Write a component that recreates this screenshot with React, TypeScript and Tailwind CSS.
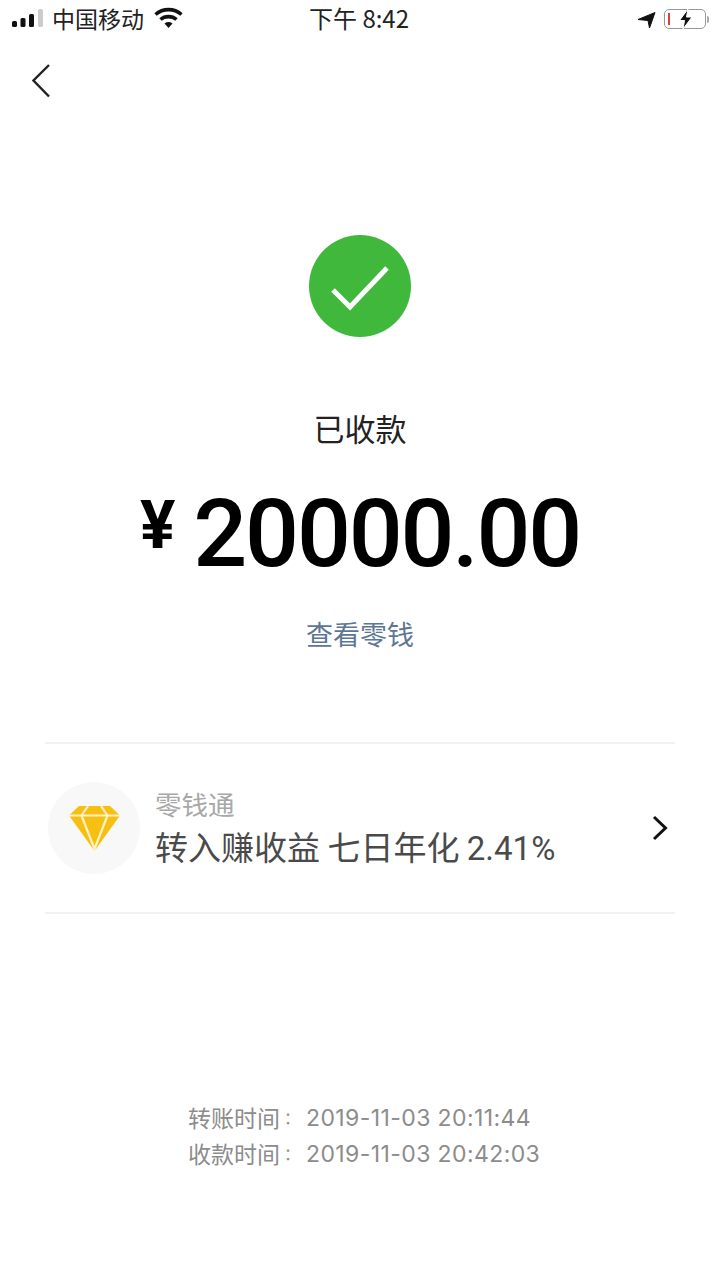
const cjk = "font-['Noto_Sans_CJK_SC','Noto_Sans',sans-serif]"

function StatusBar() {
  return (
    <div className="h-[38px] px-[12px] flex items-center justify-between relative text-[#222]">
      <div className="flex items-center -mt-[2px]">
        {/* signal bars */}
        <svg width="32" height="20" viewBox="0 0 32 20">
          <rect x="0" y="13" width="5" height="6" rx="1.5" fill="#111" />
          <rect x="8.5" y="10" width="5" height="9" rx="1.5" fill="#111" />
          <rect x="17" y="6" width="5" height="13" rx="1.5" fill="#111" />
          <rect x="26" y="1" width="5" height="18" rx="1.5" fill="#ccc" />
        </svg>
        <span className={`${cjk} ml-[8px] text-[23px] leading-none`}>中国移动</span>
        <svg className="ml-[10px]" width="29" height="22" viewBox="0 0 29 22">
          <path d="M1.5 7.5C9 1 20 1 27.5 7.5" fill="none" stroke="#111" strokeWidth="3.6" />
          <path d="M6.5 12.5C11 8.6 18 8.6 22.5 12.5" fill="none" stroke="#111" strokeWidth="3.6" />
          <path d="M10.5 16.5L14.5 21L18.5 16.5C16 14.6 13 14.6 10.5 16.5Z" fill="#111" />
        </svg>
      </div>
      <span className={`${cjk} absolute left-[309px] top-[4px] text-[24px] leading-[28px]`}>下午 8:42</span>
      <div className="flex items-center -mr-[1px]">
        <svg width="19" height="19" viewBox="0 0 19 19">
          <path d="M18 2.5L1 9.5L11 10.5L12.5 18Z" fill="#111" stroke="#111" strokeWidth="1" strokeLinejoin="round" />
        </svg>
        <div className="ml-[8px] w-[42px] h-[20px] border-[1.5px] border-[#999] rounded-[5px] relative flex items-center justify-center">
          <div className="absolute left-[3px] top-[3px] w-[2px] h-[12px] bg-[#d9433f]" />
          <svg width="15" height="20" viewBox="0 0 15 20" className="shrink-0">
            <path d="M10 0L1.5 11.5H6.5L5 20L14 8H8.5Z" fill="#111" stroke="#fff" strokeWidth="1" />
          </svg>
        </div>
        <div className="ml-[1px] w-[2px] h-[7px] bg-[#aaa] rounded-r-full" />
      </div>
    </div>
  )
}

function Diamond() {
  return (
    <svg width="51" height="45" viewBox="0 0 51 45">
      <path d="M10 0H41L51 9.5L25.5 45L0 9.5Z" fill="#f6bf12" />
      <path d="M0 9.5H51M12.5 9.5L25.5 43L38.5 9.5M12.5 9.5L19 0M38.5 9.5L32 0" fill="none" stroke="#fff3c4" strokeWidth="2.2" />
    </svg>
  )
}

function TimeRow({ label, value }: { label: string; value: string }) {
  return (
    <p className="h-[36px] flex items-center">
      <span className="-mt-[2px]">{label}</span>
      {/* TC font keeps the colon centred in its box */}
      <span className="text-[16px] font-['Noto_Sans_CJK_TC',sans-serif]">：</span>
      <span className="font-['Inter',sans-serif] ml-[10px] tracking-[0.4px]">{value}</span>
    </p>
  )
}

export default function App() {
  return (
    <div className={`${cjk} w-[720px] h-[1280px] bg-white overflow-hidden`}>
      <StatusBar />

      <div className="h-[197px] pl-[32px] pt-[26px]">
        <svg width="18" height="34" viewBox="0 0 18 34">
          <path d="M17 1L1.5 16.5L17 32.5" fill="none" stroke="#222" strokeWidth="2.4" />
        </svg>
      </div>

      <div className="flex flex-col items-center">
        <div className="w-[102px] h-[102px] rounded-full bg-[#3fb83c] flex items-center justify-center">
          <svg width="102" height="102" viewBox="0 0 102 102">
            <path d="M24 55L41 72L78 33" fill="none" stroke="#fff" strokeWidth="5" />
          </svg>
        </div>

        <p className="mt-[69px] text-[31px] leading-[44px] text-[#222]">已收款</p>

        <div className="mt-[32px] h-[104px] flex items-start text-black font-['Roboto',sans-serif] font-[550]">
          <span className="mt-[5px] text-[66px] leading-[78px] font-bold">¥</span>
          <span className="ml-[18px] text-[95px] leading-[104px] tracking-[-2.2px]">20000.00</span>
        </div>

        <p className="mt-[29px] text-[27px] leading-[38px] text-[#5e7696]">查看零钱</p>
      </div>

      <div className="mt-[89px] mx-[45px] h-[172px] border-y-2 border-[#f1f1f1] flex items-center">
        <div className="ml-[3px] w-[92px] h-[92px] rounded-full bg-[#f8f8f8] flex items-center justify-center">
          <Diamond />
        </div>
        <div className="ml-[15px] flex-1">
          <p className="text-[26.5px] leading-[36px] text-[#a8a8a8]">零钱通</p>
          <p className="mt-[2px] text-[33px] leading-[44px] text-[#4a4a4a]">
            转入赚收益 七日年化 <span className="font-['Roboto',sans-serif]">2.41%</span>
          </p>
        </div>
        <svg className="mr-[7px]" width="16" height="26" viewBox="0 0 16 26">
          <path d="M2 2L13.5 13L2 24" fill="none" stroke="#111" strokeWidth="3" />
        </svg>
      </div>

      <div className="mt-[186px] ml-[188px] text-[23px] text-[#8c8c8c]">
        <TimeRow label="转账时间" value="2019-11-03 20:11:44" />
        <TimeRow label="收款时间" value="2019-11-03 20:42:03" />
      </div>
    </div>
  )
}
